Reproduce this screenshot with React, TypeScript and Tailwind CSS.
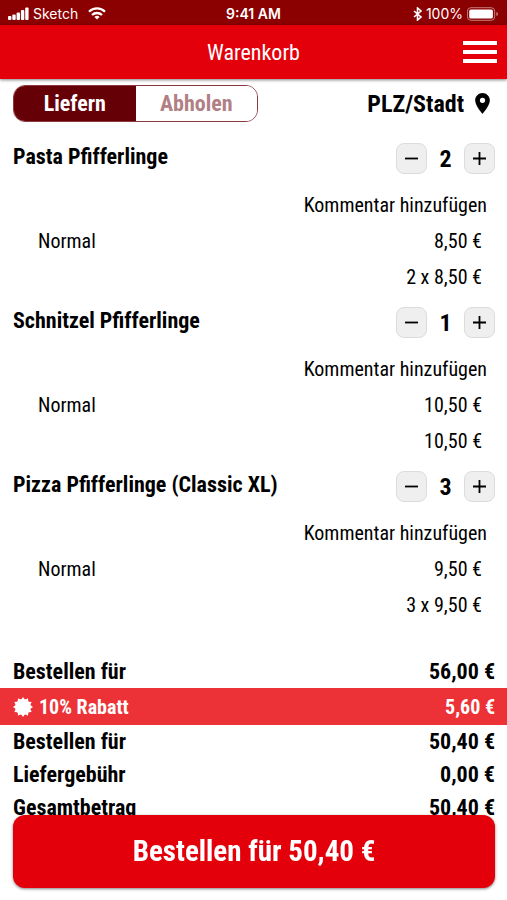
import { useState } from "react";

interface CartItem {
  id: number;
  name: string;
  variant: string;
  price: string;
  total: string;
  amount: number;
}

const initialItems: CartItem[] = [
  { id: 1, name: "Pasta Pfifferlinge", variant: "Normal", price: "8,50 €", total: "2 x 8,50 €", amount: 2 },
  { id: 2, name: "Schnitzel Pfifferlinge", variant: "Normal", price: "10,50 €", total: "10,50 €", amount: 1 },
  { id: 3, name: "Pizza Pfifferlinge (Classic XL)", variant: "Normal", price: "9,50 €", total: "3 x 9,50 €", amount: 3 },
];

const StatusBar = () => (
  <div className="grid h-[25px] grid-cols-3 items-center bg-[#8b0000] px-2 pt-0.5 font-['Inter','Liberation_Sans',sans-serif] text-[14px] leading-5 text-white">
    <div className="flex items-center gap-1">
      <svg width="21" height="13" viewBox="0 0 21 13" fill="currentColor" aria-hidden="true">
        <rect x="0" y="9" width="3.4" height="4" rx="1" />
        <rect x="4.3" y="7.5" width="3.4" height="5.5" rx="1" />
        <rect x="8.6" y="5.5" width="3.4" height="7.5" rx="1" />
        <rect x="12.9" y="3" width="3.4" height="10" rx="1" />
        <rect x="17.2" y="0.5" width="3.4" height="12.5" rx="1" />
      </svg>
      <span>Sketch</span>
      <svg className="ml-1.5" width="18" height="13" viewBox="0 0 18 13" fill="none" stroke="currentColor" strokeWidth="2.3" aria-hidden="true">
        <path d="M1 4.7a11.4 11.4 0 0 1 16 0" />
        <path d="M4 8a7.2 7.2 0 0 1 10 0" />
        <path d="M9 12.6 6.4 10a3.7 3.7 0 0 1 5.2 0z" fill="currentColor" stroke="none" />
      </svg>
    </div>
    <span className="text-center font-semibold">9:41 AM</span>
    <div className="flex items-center justify-end gap-1">
      <svg width="9" height="14" viewBox="0 0 9 14" fill="none" stroke="currentColor" strokeWidth="1.6" aria-hidden="true">
        <path d="M1 4l7 6-3.5 3V1L8 4l-7 6" />
      </svg>
      <span>100%</span>
      <svg width="32" height="14" viewBox="0 0 33 14" aria-hidden="true">
        <rect x="0.5" y="0.5" width="28" height="13" rx="3.5" fill="none" stroke="#c78080" />
        <rect x="2.3" y="2.3" width="24.4" height="9.4" rx="1.6" fill="#fff" />
        <path d="M30.3 5v4c1-.3 1.7-1 1.7-2s-.7-1.7-1.7-2z" fill="#c78080" />
      </svg>
    </div>
  </div>
);

const Header = () => (
  <header className="grid h-[54px] grid-cols-[36px_1fr_36px] items-center bg-[#e3000b] px-2.5 text-white shadow-[0_1px_3px_rgba(0,0,0,0.5)]">
    <span />
    <h1 className="pt-0.5 text-center text-[22px] leading-6">Warenkorb</h1>
    <button type="button" aria-label="Menü" className="flex h-6 w-[34px] flex-col justify-between justify-self-end py-px">
      <span className="h-1 w-full bg-white" />
      <span className="h-1 w-full bg-white" />
      <span className="h-1 w-full bg-white" />
    </button>
  </header>
);

interface StepButtonProps {
  label: string;
  plus?: boolean;
  onClick: () => void;
}

const StepButton = ({ label, plus, onClick }: StepButtonProps) => (
  <button
    type="button"
    aria-label={label}
    onClick={onClick}
    className="flex h-[31px] w-[31px] items-center justify-center rounded-lg border border-[#dcdcdc] bg-[#efefef] text-black"
  >
    <svg width="15" height="15" viewBox="0 0 15 15" stroke="currentColor" strokeWidth="1.8" aria-hidden="true">
      <path d={plus ? "M1 7.5h13M7.5 1v13" : "M1 7.5h13"} />
    </svg>
  </button>
);

interface CartRowProps {
  item: CartItem;
  onChange: (id: number, step: number) => void;
}

const CartRow = ({ item, onChange }: CartRowProps) => (
  <li className="pb-3">
    <div className="flex h-[31px] items-center justify-between">
      <h2 className="pb-1 text-[22px] leading-6 font-bold">{item.name}</h2>
      <div className="flex items-center">
        <StepButton label={`${item.name} weniger`} onClick={() => onChange(item.id, -1)} />
        <span className="w-[37px] text-center text-2xl leading-6 font-bold">{item.amount}</span>
        <StepButton label={`${item.name} mehr`} plus onClick={() => onChange(item.id, 1)} />
      </div>
    </div>
    <div className="mt-[13px] flex h-9 items-center justify-end pr-2">
      <button type="button" className="text-[20px] leading-6">Kommentar hinzufügen</button>
    </div>
    <div className="flex h-9 items-center justify-between pr-[13px] pl-[25px] text-[20px] leading-6">
      <span>{item.variant}</span>
      <span>{item.price}</span>
    </div>
    <div className="flex h-9 items-center justify-end pr-[13px] text-[20px] leading-6">{item.total}</div>
  </li>
);

const badgeAngles = [0, 30, 60, 90, 120, 150];

const DiscountBadge = () => (
  <svg width="20" height="20" viewBox="0 0 24 24" fill="currentColor" aria-hidden="true">
    <circle cx="12" cy="12" r="9.5" />
    {badgeAngles.map((angle) => (
      <path key={angle} d="M9.9 3 12 0l2.1 3v18L12 24l-2.1-3z" transform={`rotate(${angle} 12 12)`} />
    ))}
  </svg>
);

const SummaryRow = ({ label, value }: { label: string; value: string }) => (
  <div className="flex h-[33px] items-center justify-between pr-3 pl-[13px] text-[22px] leading-6 font-bold">
    <dt>{label}</dt>
    <dd>{value}</dd>
  </div>
);

const App = () => {
  const [items, setItems] = useState(initialItems);
  const [pickup, setPickup] = useState(false);

  const changeAmount = (id: number, step: number) => {
    setItems((prev) =>
      prev.map((item) => (item.id === id ? { ...item, amount: Math.max(0, item.amount + step) } : item))
    );
  };

  const active = "bg-[#650006] text-white";
  const inactive = "bg-white text-[#b17f84]";

  return (
    <div className="min-h-screen bg-white font-['Roboto_Condensed','Liberation_Sans_Narrow','Roboto',sans-serif] text-black">
      <StatusBar />
      <Header />

      <main>
        <div className="flex items-center justify-between pt-1.5 pr-3 pl-[13px]">
          <div className="grid h-[37px] w-[245px] grid-cols-2 overflow-hidden rounded-xl border border-[#8b3a40] text-[22px] leading-6 font-bold">
            <button type="button" aria-pressed={!pickup} onClick={() => setPickup(false)} className={pickup ? inactive : active}>
              Liefern
            </button>
            <button type="button" aria-pressed={pickup} onClick={() => setPickup(true)} className={pickup ? active : inactive}>
              Abholen
            </button>
          </div>
          <button type="button" className="flex items-center gap-[11px] pr-[5px] text-2xl leading-6 font-bold">
            PLZ/Stadt
            <svg width="15" height="21" viewBox="0 0 14 20" fill="currentColor" aria-hidden="true">
              <path d="M7 0C3.13 0 0 3.13 0 7c0 5.25 7 13 7 13s7-7.75 7-13c0-3.87-3.13-7-7-7zm0 9.5a2.5 2.5 0 1 1 0-5 2.5 2.5 0 0 1 0 5z" />
            </svg>
          </button>
        </div>

        <ul className="pt-[21px] pr-3 pl-[13px]">
          {items.map((item) => (
            <CartRow key={item.id} item={item} onChange={changeAmount} />
          ))}
        </ul>

        <dl className="pt-5">
          <SummaryRow label="Bestellen für" value="56,00 €" />
          <div className="flex h-[37px] items-center justify-between bg-[#ed3237] pr-3 pl-[13px] text-[20px] leading-6 font-bold text-white">
            <dt className="flex items-center gap-1.5">
              <DiscountBadge />
              10% Rabatt
            </dt>
            <dd>5,60 €</dd>
          </div>
          <SummaryRow label="Bestellen für" value="50,40 €" />
          <SummaryRow label="Liefergebühr" value="0,00 €" />
          <SummaryRow label="Gesamtbetrag" value="50,40 €" />
        </dl>
      </main>

      {/* order button stays on top of the scrolling list */}
      <div className="fixed inset-x-0 bottom-3 pr-3 pl-[13px]">
        <button
          type="button"
          className="h-[73px] w-full rounded-xl bg-[#e3000b] pb-0.5 text-[29px] leading-8 font-bold text-white shadow-[0_1px_3px_rgba(0,0,0,0.5)]"
        >
          Bestellen für 50,40 €
        </button>
      </div>
    </div>
  );
};

export default App;
